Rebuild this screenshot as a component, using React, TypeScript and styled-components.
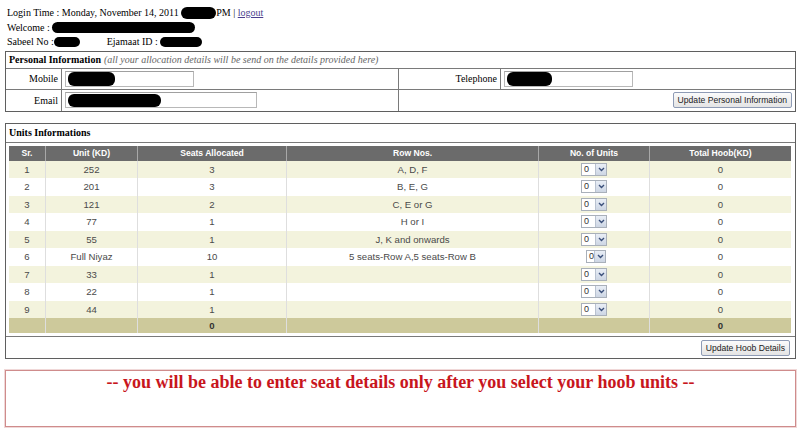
import React from "react";
import styled, { createGlobalStyle } from "styled-components";

const Global = createGlobalStyle`
  html, body { margin: 0; padding: 0; background: #fff; }
  body { font-family: "Liberation Serif", "Times New Roman", serif; color: #000; }
`;

const Page = styled.div`
  width: 800px;
  height: 439px;
  box-sizing: border-box;
  padding: 6px 4px 0 5px;
  display: flex;
  flex-direction: column;
  overflow: hidden;
`;

const InfoLines = styled.div`
  display: flex;
  flex-direction: column;
  padding-left: 2px;
  font-size: 10px;
  line-height: 14.5px;
  margin-bottom: 1px;
`;

const InfoLine = styled.div`
  display: flex;
  align-items: center;
  white-space: pre;
`;

const Redact = styled.span<{ $w: number; $h?: number }>`
  display: inline-block;
  width: ${(p) => p.$w}px;
  height: ${(p) => p.$h ?? 11}px;
  background: #000;
  border-radius: 6px;
`;

const Link = styled.a`
  color: #4a3f8e;
  text-decoration: underline;
`;

const Gap = styled.span<{ $w: number }>`
  display: inline-block;
  width: ${(p) => p.$w}px;
`;

const Box = styled.div<{ $mt?: number }>`
  border: 1px solid #5f5f5f;
  margin-top: ${(p) => p.$mt ?? 0}px;
  box-sizing: border-box;
  background: #fff;
`;

const PersonalGrid = styled.div`
  display: grid;
  grid-template-columns: 56px 337px 102px 1fr;
  grid-template-rows: 17px 21px 21px;
`;

const Cell = styled.div<{ $span?: number; $right?: boolean; $noRight?: boolean; $noBottom?: boolean }>`
  grid-column: span ${(p) => p.$span ?? 1};
  display: flex;
  align-items: center;
  justify-content: ${(p) => (p.$right ? "flex-end" : "flex-start")};
  border-right: ${(p) => (p.$noRight ? "none" : "1px solid #7a7a7a")};
  border-bottom: ${(p) => (p.$noBottom ? "none" : "1px solid #7a7a7a")};
  padding: 0 3px;
  font-size: 10px;
  box-sizing: border-box;
  white-space: nowrap;
`;

const Strong = styled.span`
  font-weight: bold;
`;

const Note = styled.span`
  font-style: italic;
  color: #666;
  margin-left: 3px;
`;

const TextBox = styled.div<{ $w: number }>`
  width: ${(p) => p.$w}px;
  height: 16px;
  box-sizing: border-box;
  border: 1px solid #b8b8b8;
  border-top-color: #a0a0a0;
  display: flex;
  align-items: center;
  padding-left: 2px;
`;

const Button = styled.button`
  font-family: "Liberation Sans", Arial, sans-serif;
  font-size: 8.6px;
  color: #222;
  height: 16px;
  padding: 0 4px;
  border: 1px solid #8e9bb5;
  border-radius: 2px;
  background: linear-gradient(#fbfbfb, #e4e4e4);
  line-height: 14px;
  cursor: pointer;
`;

const TitleRow = styled.div`
  height: 18px;
  border-bottom: 1px solid #7a7a7a;
  display: flex;
  align-items: center;
  padding-left: 3px;
  font-size: 10px;
  font-weight: bold;
`;

const TableWrap = styled.div`
  padding: 3px 4px 3px 3px;
  border-bottom: 1px solid #7a7a7a;
`;

const Table = styled.table`
  width: 782px;
  border-collapse: collapse;
  table-layout: fixed;
  font-family: "Liberation Sans", Arial, sans-serif;
  font-size: 9.6px;
  color: #4a4a4a;
`;

const Th = styled.th<{ $w?: number }>`
  width: ${(p) => (p.$w ? `${p.$w}px` : "auto")};
  background: #6b6b6b;
  color: #fff;
  font-weight: bold;
  font-size: 8.6px;
  height: 15px;
  padding: 0;
  border-left: 1px solid #a8a8a8;
  &:first-child { border-left: none; }
`;

const Tr = styled.tr<{ $kind: "odd" | "even" | "foot" }>`
  background: ${(p) => (p.$kind === "odd" ? "#f3f3dd" : p.$kind === "even" ? "#ffffff" : "#cdc99b")};
  height: ${(p) => (p.$kind === "foot" ? 15 : 17.5)}px;
  font-weight: ${(p) => (p.$kind === "foot" ? "bold" : "normal")};
  color: ${(p) => (p.$kind === "foot" ? "#333" : "#4a4a4a")};
`;

const Td = styled.td`
  text-align: center;
  padding: 0;
  border-left: 1px solid #dedede;
  &:first-child { border-left: none; }
`;

const Select = styled.span<{ $narrow?: boolean }>`
  display: inline-flex;
  align-items: stretch;
  vertical-align: middle;
  height: 13px;
  width: ${(p) => (p.$narrow ? 20 : 26)}px;
  box-sizing: border-box;
  border: 1px solid #a9b0ba;
  background: #fff;
  font-size: 9px;
  color: #333;
  margin-left: ${(p) => (p.$narrow ? 4 : 0)}px;
`;

const SelectVal = styled.span`
  flex: 1;
  text-align: left;
  padding-left: 2px;
  line-height: 11px;
`;

const SelectArrow = styled.span`
  width: 10px;
  background: linear-gradient(#e9eef6, #cdd6e4);
  border-left: 1px solid #b9c2d0;
  display: flex;
  align-items: center;
  justify-content: center;
`;

const ButtonRow = styled.div`
  height: 21px;
  display: flex;
  align-items: center;
  justify-content: flex-end;
  padding-right: 5px;
`;

const Notice = styled.div`
  margin-top: 11px;
  height: 57px;
  box-sizing: border-box;
  border: 1px solid #cf8c8c;
  outline: 1px solid #f0d8d8;
  display: flex;
  justify-content: center;
  padding-top: 1px;
  color: #c8161d;
  font-weight: bold;
  font-size: 18px;
  font-family: "Liberation Serif", "Times New Roman", serif;
`;

const rows = [
  ["1", "252", "3", "A, D, F"],
  ["2", "201", "3", "B, E, G"],
  ["3", "121", "2", "C, E or G"],
  ["4", "77", "1", "H or I"],
  ["5", "55", "1", "J, K and onwards"],
  ["6", "Full Niyaz", "10", "5 seats-Row A,5 seats-Row B"],
  ["7", "33", "1", ""],
  ["8", "22", "1", ""],
  ["9", "44", "1", ""],
];

const Chevron = () => (
  <svg width="7" height="5" viewBox="0 0 7 5">
    <path d="M1 1 L3.5 3.5 L6 1" stroke="#3a4f7a" strokeWidth="1.4" fill="none" />
  </svg>
);

export default function App() {
  return (
    <>
      <Global />
      <Page>
        <InfoLines>
          <InfoLine>
            Login Time : Monday, November 14, 2011 <Redact $w={35} $h={12} />PM | <Link href="#">logout</Link>
          </InfoLine>
          <InfoLine>
            Welcome : <Redact $w={143} />
          </InfoLine>
          <InfoLine>
            Sabeel No :<Redact $w={26} $h={10} />
            <Gap $w={27} />Ejamaat ID : <Redact $w={42} $h={10} />
          </InfoLine>
        </InfoLines>

        <Box>
          <PersonalGrid>
            <Cell $span={4} $noRight>
              <Strong>Personal Information</Strong>
              <Note>(all your allocation details will be send on the details provided here)</Note>
            </Cell>
            <Cell $right>Mobile</Cell>
            <Cell>
              <TextBox $w={129}>
                <Redact $w={47} $h={14} />
              </TextBox>
            </Cell>
            <Cell $right>Telephone</Cell>
            <Cell $noRight>
              <TextBox $w={129}>
                <Redact $w={45} $h={14} />
              </TextBox>
            </Cell>
            <Cell $right $noBottom>Email</Cell>
            <Cell $noBottom>
              <TextBox $w={192}>
                <Redact $w={93} $h={13} />
              </TextBox>
            </Cell>
            <Cell $span={2} $right $noRight $noBottom>
              <Button>Update Personal Information</Button>
            </Cell>
          </PersonalGrid>
        </Box>

        <Box $mt={11}>
          <TitleRow>Units Informations</TitleRow>
          <TableWrap>
            <Table>
              <thead>
                <tr>
                  <Th $w={36}>Sr.</Th>
                  <Th $w={91}>Unit (KD)</Th>
                  <Th $w={148}>Seats Allocated</Th>
                  <Th $w={251}>Row Nos.</Th>
                  <Th $w={110}>No. of Units</Th>
                  <Th>Total Hoob(KD)</Th>
                </tr>
              </thead>
              <tbody>
                {rows.map((r, i) => (
                  <Tr key={r[0]} $kind={i % 2 === 0 ? "odd" : "even"}>
                    <Td>{r[0]}</Td>
                    <Td>{r[1]}</Td>
                    <Td>{r[2]}</Td>
                    <Td>{r[3]}</Td>
                    <Td>
                      <Select $narrow={r[0] === "6"}>
                        <SelectVal>0</SelectVal>
                        <SelectArrow>
                          <Chevron />
                        </SelectArrow>
                      </Select>
                    </Td>
                    <Td>0</Td>
                  </Tr>
                ))}
                <Tr $kind="foot">
                  <Td />
                  <Td />
                  <Td>0</Td>
                  <Td />
                  <Td />
                  <Td>0</Td>
                </Tr>
              </tbody>
            </Table>
          </TableWrap>
          <ButtonRow>
            <Button>Update Hoob Details</Button>
          </ButtonRow>
        </Box>

        <Notice>-- you will be able to enter seat details only after you select your hoob units --</Notice>
      </Page>
    </>
  );
}
